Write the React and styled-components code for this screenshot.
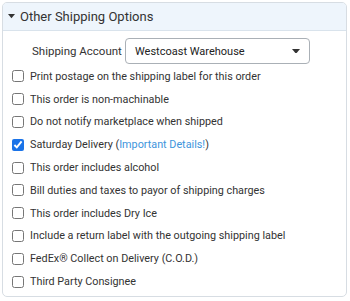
import styled, { createGlobalStyle } from "styled-components";

const GlobalStyle = createGlobalStyle`
  body {
    margin: 0;
    background: #ffffff;
    font-family: Roboto, "Liberation Sans", sans-serif;
    color: #333;
  }
`;

const Panel = styled.div`
  margin: 2px 0 0 2px;
  width: 343px;
  height: 293px;
  border: 1px solid #d7dde3;
  border-radius: 5px;
  overflow: hidden;
  background: #fff;
`;

const Header = styled.div`
  display: flex;
  align-items: center;
  gap: 5px;
  height: 27px;
  padding: 0 0 0 5px;
  background: #eef5fc;
  border-bottom: 1px solid #d9e3ec;
  font-size: 13px;
  color: #333;
`;

const Body = styled.div`
  display: flex;
  flex-direction: column;
  padding: 7px 0 0 8px;
`;

const AccountRow = styled.div`
  display: flex;
  align-items: center;
  gap: 6px;
  padding-left: 21px;
  margin-bottom: 1px;
  white-space: nowrap;
`;

const Label = styled.span`
  width: 87px;
  text-align: right;
  font-size: 11.5px;
`;

const Select = styled.div`
  display: flex;
  align-items: center;
  justify-content: space-between;
  box-sizing: border-box;
  width: 185px;
  height: 26px;
  padding: 0 9px 0 9px;
  border: 1px solid #aab0b6;
  border-radius: 4px;
  font-size: 11px;
  color: #222;
`;

const Option = styled.label`
  display: flex;
  align-items: center;
  gap: 6px;
  height: 22.8px;
  font-size: 10.8px;
  color: #333;
  white-space: nowrap;
`;

const Box = styled.input.attrs({ type: "checkbox" })`
  width: 12px;
  height: 12px;
  margin: 0 0 0 1px;
  accent-color: #1a73e8;
`;

const Link = styled.span`
  color: #3d95dc;
`;

const Caret = ({ size = 7 }) => (
  <svg width={size} height={size * 0.6} viewBox="0 0 10 6">
    <path d="M0 0 L10 0 L5 6 Z" fill="#333" />
  </svg>
);

const options = [
  { text: "Print postage on the shipping label for this order" },
  { text: "This order is non-machinable" },
  { text: "Do not notify marketplace when shipped" },
  { text: "Saturday Delivery", link: "Important Details!", checked: true },
  { text: "This order includes alcohol" },
  { text: "Bill duties and taxes to payor of shipping charges" },
  { text: "This order includes Dry Ice" },
  { text: "Include a return label with the outgoing shipping label" },
  { text: "FedEx® Collect on Delivery (C.O.D.)" },
  { text: "Third Party Consignee" },
];

export default function App() {
  return (
    <>
      <GlobalStyle />
      <Panel>
        <Header>
          <Caret size={7} />
          Other Shipping Options
        </Header>
        <Body>
          <AccountRow>
            <Label>Shipping Account</Label>
            <Select>
              Westcoast Warehouse
              <Caret size={8} />
            </Select>
          </AccountRow>
          {options.map((o) => (
            <Option key={o.text}>
              <Box defaultChecked={o.checked} />
              <span>
                {o.text}
                {o.link && (
                  <>
                    {" ("}
                    <Link>{o.link}</Link>)
                  </>
                )}
              </span>
            </Option>
          ))}
        </Body>
      </Panel>
    </>
  );
}
